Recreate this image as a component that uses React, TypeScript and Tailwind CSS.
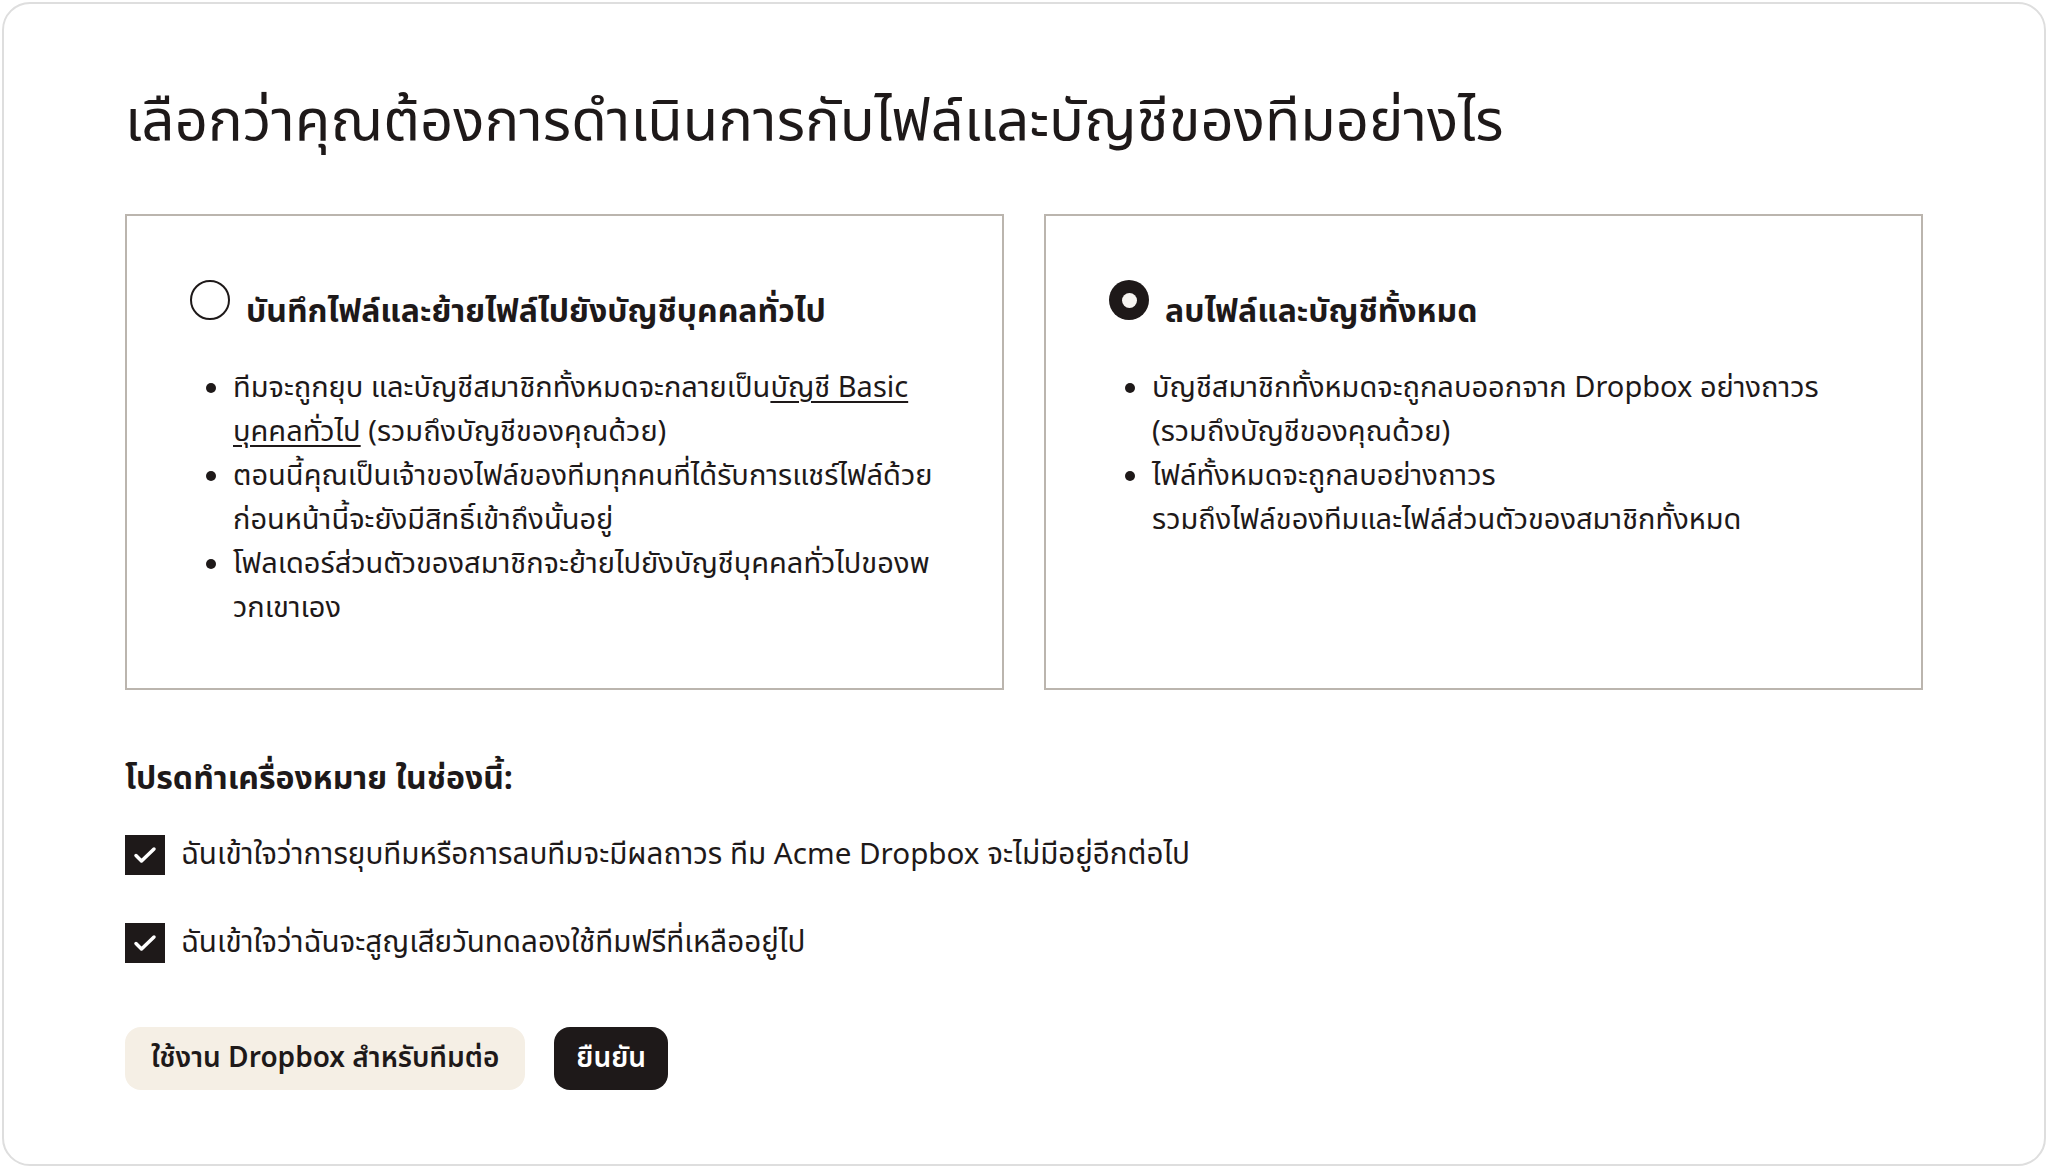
import React, { useState } from 'react';

const font = { fontFamily: '"Noto Sans Thai", "Noto Sans", "Liberation Sans", sans-serif' };

type Choice = 'keep' | 'delete';

const Radio: React.FC<{ checked: boolean }> = ({ checked }) =>
  checked ? (
    <span className="flex h-[40px] w-[40px] shrink-0 items-center justify-center rounded-full bg-[#1e1919]">
      <span className="h-[15px] w-[15px] rounded-full bg-[#f7f5f2]" />
    </span>
  ) : (
    <span className="h-[40px] w-[40px] shrink-0 rounded-full border-2 border-[#1e1919] bg-white" />
  );

const Checkbox: React.FC<{ checked: boolean }> = ({ checked }) => (
  <span
    className={`flex h-[40px] w-[40px] shrink-0 items-center justify-center ${
      checked ? 'bg-[#1e1919]' : 'border-2 border-[#1e1919] bg-white'
    }`}
  >
    {checked && (
      <svg width="26" height="26" viewBox="0 0 26 26" fill="none">
        <path d="M4 13.5l5.5 5.5L22 7" stroke="#ffffff" strokeWidth="3.5" strokeLinecap="round" strokeLinejoin="round" />
      </svg>
    )}
  </span>
);

const Bullet: React.FC<{ children: React.ReactNode }> = ({ children }) => (
  <li className="flex">
    <span className="flex h-[44px] w-[27px] shrink-0 items-center">
      <span className="h-[10px] w-[10px] rounded-full bg-[#1e1919]" />
    </span>
    <span>{children}</span>
  </li>
);

const OptionCard: React.FC<{
  checked: boolean;
  title: string;
  onSelect: () => void;
  children: React.ReactNode;
}> = ({ checked, title, onSelect, children }) => (
  <div
    onClick={onSelect}
    className="cursor-pointer border-2 border-[#bbb5ae] bg-white px-[63px] pb-[58px] pt-[64px]"
  >
    <div className="flex items-start gap-[16px]">
      <Radio checked={checked} />
      <span className="mt-[12px] text-[32px] font-bold leading-[40px]">{title}</span>
    </div>
    <ul className="mt-[34px] pl-[16px] text-[29px] leading-[44px]">{children}</ul>
  </div>
);

export default function App() {
  const [choice, setChoice] = useState<Choice>('delete');
  const [agreeA, setAgreeA] = useState(true);
  const [agreeB, setAgreeB] = useState(true);

  return (
    <div style={font} className="h-[1168px] w-full bg-white p-[2px] text-[#1e1919]">
      <div className="h-full rounded-[28px] border-2 border-[#dedede] px-[121px] pt-[82px]">
        <h1 className="text-[58px] font-normal leading-[72px]">
          เลือกว่าคุณต้องการดำเนินการกับไฟล์และบัญชีของทีมอย่างไร
        </h1>

        <div className="mt-[56px] grid grid-cols-2 gap-[40px]">
          <OptionCard
            checked={choice === 'keep'}
            title="บันทึกไฟล์และย้ายไฟล์ไปยังบัญชีบุคคลทั่วไป"
            onSelect={() => setChoice('keep')}
          >
            <Bullet>
              ทีมจะถูกยุบ และบัญชีสมาชิกทั้งหมดจะกลายเป็น<span className="underline underline-offset-4">บัญชี Basic</span>
              <br />
              <span className="underline underline-offset-4">บุคคลทั่วไป</span> (รวมถึงบัญชีของคุณด้วย)
            </Bullet>
            <Bullet>
              ตอนนี้คุณเป็นเจ้าของไฟล์ของทีมทุกคนที่ได้รับการแชร์ไฟล์ด้วย
              <br />
              ก่อนหน้านี้จะยังมีสิทธิ์เข้าถึงนั้นอยู่
            </Bullet>
            <Bullet>
              โฟลเดอร์ส่วนตัวของสมาชิกจะย้ายไปยังบัญชีบุคคลทั่วไปของพ
              <br />
              วกเขาเอง
            </Bullet>
          </OptionCard>

          <OptionCard
            checked={choice === 'delete'}
            title="ลบไฟล์และบัญชีทั้งหมด"
            onSelect={() => setChoice('delete')}
          >
            <Bullet>
              บัญชีสมาชิกทั้งหมดจะถูกลบออกจาก Dropbox อย่างถาวร
              <br />
              (รวมถึงบัญชีของคุณด้วย)
            </Bullet>
            <Bullet>
              ไฟล์ทั้งหมดจะถูกลบอย่างถาวร
              <br />
              รวมถึงไฟล์ของทีมและไฟล์ส่วนตัวของสมาชิกทั้งหมด
            </Bullet>
          </OptionCard>
        </div>

        <h2 className="mt-[67px] text-[32px] font-bold leading-[44px]">โปรดทำเครื่องหมาย ในช่องนี้:</h2>

        <div className="mt-[34px] flex flex-col gap-[48px] text-[29.6px] leading-[40px]">
          <label className="flex cursor-pointer items-center gap-[16px]" onClick={() => setAgreeA(!agreeA)}>
            <Checkbox checked={agreeA} />
            <span>ฉันเข้าใจว่าการยุบทีมหรือการลบทีมจะมีผลถาวร ทีม Acme Dropbox จะไม่มีอยู่อีกต่อไป</span>
          </label>
          <label className="flex cursor-pointer items-center gap-[16px]" onClick={() => setAgreeB(!agreeB)}>
            <Checkbox checked={agreeB} />
            <span>ฉันเข้าใจว่าฉันจะสูญเสียวันทดลองใช้ทีมฟรีที่เหลืออยู่ไป</span>
          </label>
        </div>

        <div className="mt-[64px] flex gap-[29px]">
          <button className="h-[63px] rounded-[16px] bg-[#f5efe5] px-[26px] text-[28px] font-semibold">
            ใช้งาน Dropbox สำหรับทีมต่อ
          </button>
          <button className="h-[63px] rounded-[16px] bg-[#1e1919] px-[22px] text-[28px] font-semibold text-white">
            ยืนยัน
          </button>
        </div>
      </div>
    </div>
  );
}
